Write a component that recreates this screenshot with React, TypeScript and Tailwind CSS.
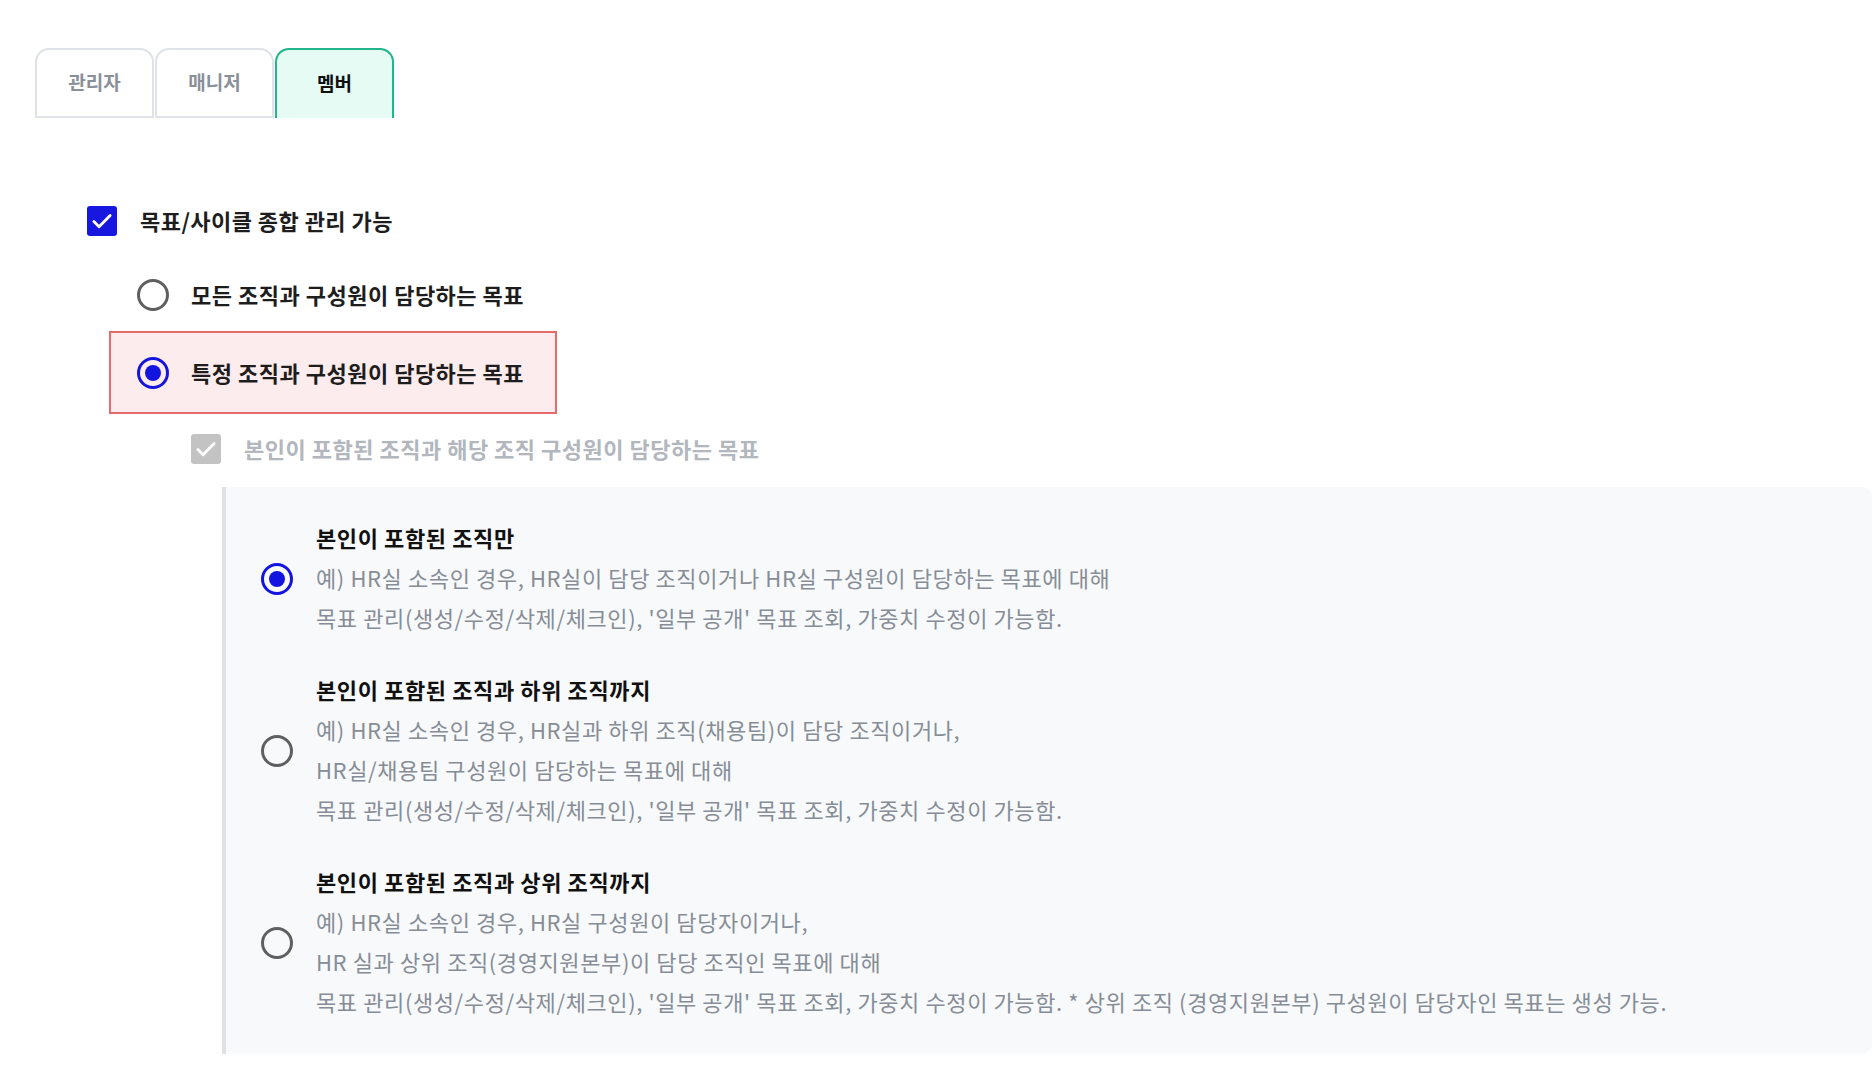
import React from 'react';

const font = { fontFamily: '"Noto Sans CJK KR", "Noto Sans", sans-serif' };

type Option = {
  title: string;
  lines: string[];
  selected?: boolean;
};

const options: Option[] = [
  {
    title: '본인이 포함된 조직만',
    lines: [
      '예) HR실 소속인 경우, HR실이 담당 조직이거나 HR실 구성원이 담당하는 목표에 대해',
      "목표 관리(생성/수정/삭제/체크인), '일부 공개' 목표 조회, 가중치 수정이 가능함.",
    ],
    selected: true,
  },
  {
    title: '본인이 포함된 조직과 하위 조직까지',
    lines: [
      '예) HR실 소속인 경우, HR실과 하위 조직(채용팀)이 담당 조직이거나,',
      'HR실/채용팀 구성원이 담당하는 목표에 대해',
      "목표 관리(생성/수정/삭제/체크인), '일부 공개' 목표 조회, 가중치 수정이 가능함.",
    ],
  },
  {
    title: '본인이 포함된 조직과 상위 조직까지',
    lines: [
      '예) HR실 소속인 경우, HR실 구성원이 담당자이거나,',
      'HR 실과 상위 조직(경영지원본부)이 담당 조직인 목표에 대해',
      "목표 관리(생성/수정/삭제/체크인), '일부 공개' 목표 조회, 가중치 수정이 가능함. * 상위 조직 (경영지원본부) 구성원이 담당자인 목표는 생성 가능.",
    ],
  },
];

function Radio({ checked }: { checked?: boolean }) {
  if (checked) {
    return (
      <span className="w-[32px] h-[32px] shrink-0 rounded-full border-[3px] border-[#1414e0] flex items-center justify-center">
        <span className="w-[16px] h-[16px] rounded-full bg-[#1414e0]" />
      </span>
    );
  }
  return <span className="w-[32px] h-[32px] shrink-0 rounded-full border-[3px] border-[#5f5f5f]" />;
}

function Check({ disabled }: { disabled?: boolean }) {
  return (
    <span
      className={
        'w-[30px] h-[30px] shrink-0 rounded-[3px] flex items-center justify-center ' +
        (disabled ? 'bg-[#c3c3c3]' : 'bg-[#1717e0]')
      }
    >
      <svg width="26" height="26" viewBox="0 0 24 24" fill="none" stroke="white" strokeWidth="2.6" strokeLinecap="round" strokeLinejoin="round">
        <path d="M4.5 12.5l4.8 4.8L19.5 7" />
      </svg>
    </span>
  );
}

export default function App() {
  const tabs = ['관리자', '매니저', '멤버'];
  return (
    <div className="w-[1874px] h-[1088px] bg-white overflow-hidden" style={font}>
      {/* tabs */}
      <div className="pt-[48px] pl-[35px] flex">
        {tabs.map((tab, i) => {
          const active = i === 2;
          return (
            <div
              key={tab}
              className={
                'w-[119px] h-[70px] pb-[2px] rounded-t-[14px] flex items-center justify-center text-[19px] font-bold ' +
                (active
                  ? 'border-2 border-b-0 border-[#20b58a] bg-[#e6fbf4] text-[#111]'
                  : 'border-2 border-[#dfe2e6] bg-white text-[#8a9099] mr-[1px]')
              }
            >
              {tab}
            </div>
          );
        })}
      </div>

      <div className="pl-[87px] mt-[88px]">
        {/* master checkbox */}
        <div className="flex items-center gap-[23px] h-[30px]">
          <Check />
          <span className="text-[22px] leading-[28px] pb-[3px] font-bold text-[#1d1d1d] tracking-[0.45px]">목표/사이클 종합 관리 가능</span>
        </div>

        <div className="ml-[22px] w-[448px]">
          <div className="mt-[39px] h-[40px] px-[26px] flex items-center gap-[22px] border-2 border-transparent">
            <Radio />
            <span className="text-[22px] leading-[28px] pb-[2px] font-bold text-[#1d1d1d] tracking-[0.5px] whitespace-nowrap">모든 조직과 구성원이 담당하는 목표</span>
          </div>
          <div className="mt-[16px] h-[83px] px-[26px] flex items-center gap-[22px] border-2 border-[#e56a6a] bg-[#fdeced]">
            <Radio checked />
            <span className="text-[22px] leading-[28px] pb-[2px] font-bold text-[#1d1d1d] tracking-[0.5px] whitespace-nowrap">특정 조직과 구성원이 담당하는 목표</span>
          </div>
        </div>

        <div className="mt-[20px] ml-[104px] flex items-center gap-[23px] h-[30px]">
          <Check disabled />
          <span className="text-[22px] leading-[28px] pb-[2px] font-bold text-[#b2b6bd] tracking-[0.5px]">본인이 포함된 조직과 해당 조직 구성원이 담당하는 목표</span>
        </div>

        {/* sub options panel */}
        <div className="mt-[23px] ml-[135px] mr-[2px] border-l-4 border-[#dfe1e5] bg-[#f8f9fb] rounded-r-[10px] pl-[35px] pt-[32px] pb-[32px] flex flex-col gap-[33px]">
          {options.map((opt) => (
            <div key={opt.title} className="flex items-center gap-[23px]">
              <Radio checked={opt.selected} />
              <div className="flex flex-col">
                <div className="h-[39px] pb-[2px] flex items-center text-[22px] font-bold text-[#111] tracking-[0.6px]">{opt.title}</div>
                {opt.lines.map((line) => (
                  <div key={line} className="h-[40px] pb-[2px] flex items-center text-[22px] text-[#868d96] tracking-[0.6px] whitespace-nowrap">
                    {line}
                  </div>
                ))}
              </div>
            </div>
          ))}
        </div>
      </div>
    </div>
  );
}
